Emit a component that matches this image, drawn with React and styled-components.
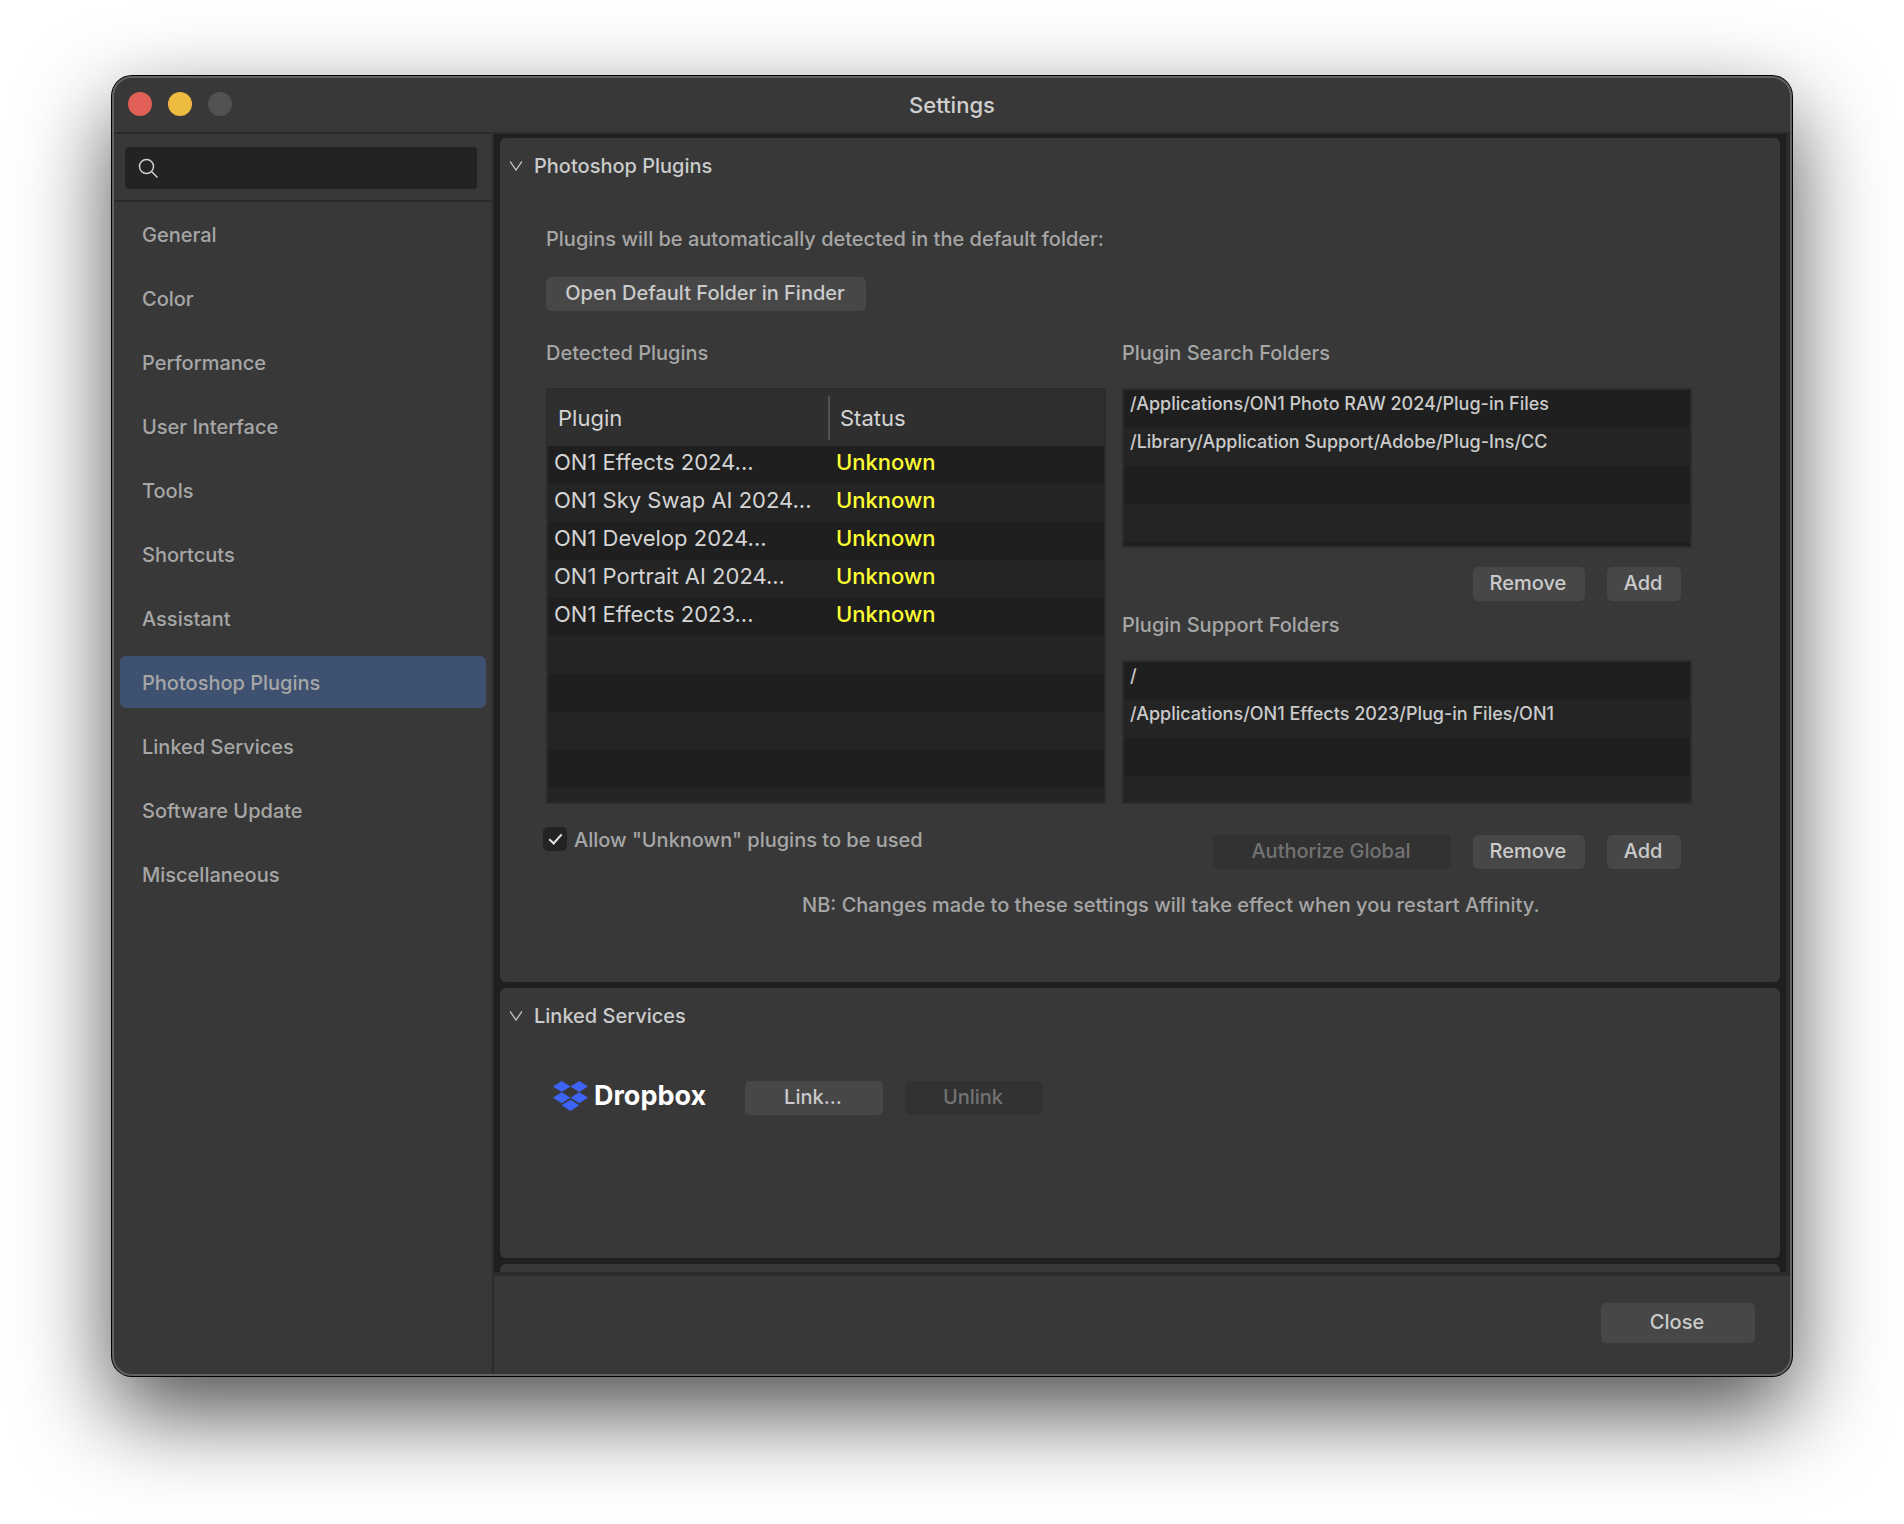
import React, { useState } from "react";
import styled, { createGlobalStyle } from "styled-components";

const GlobalStyle = createGlobalStyle`
  *, *::before, *::after { box-sizing: border-box; }
  body {
    margin: 0;
    background: #ffffff;
    font-family: Inter, "Liberation Sans", sans-serif;
    font-size: 20px;
    font-weight: 500;
    line-height: 24px;
    color: #a6a6a6;
  }
  button, input { font: inherit; }
`;

const Desktop = styled.div`
  display: flex;
  height: 100vh;
  padding: 76px 112px 148px;
  overflow: hidden;
`;

const Window = styled.div`
  flex: 1;
  display: flex;
  flex-direction: column;
  min-width: 0;
  overflow: hidden;
  border: 2px solid #626262;
  border-radius: 20px;
  background: #383838;
  box-shadow: 0 0 0 1px #000000, 0 36px 90px rgba(0, 0, 0, 0.7);
`;

const TitleBar = styled.header`
  display: grid;
  grid-template-columns: 1fr auto 1fr;
  align-items: center;
  height: 56px;
  padding: 0 14px;
  border-bottom: 2px solid #2b2b2b;
`;

const Title = styled.h1`
  margin: 0;
  font-size: 22px;
  font-weight: 500;
  color: #cfcfcf;
`;

const TrafficLights = styled.div`
  display: flex;
  gap: 16px;
  padding-bottom: 2px;
`;

const Light = styled.button`
  width: 24px;
  height: 24px;
  padding: 0;
  border: 0;
  border-radius: 50%;
  background: ${(p) => p.$color};
`;

const Body = styled.div`
  flex: 1;
  display: flex;
  min-height: 0;
`;

const Sidebar = styled.aside`
  flex: none;
  width: 380px;
  border-right: 2px solid #2b2b2b;
`;

const SearchBar = styled.div`
  padding: 13px 15px 11px 11px;
  border-bottom: 2px solid #2b2b2b;
`;

const SearchField = styled.label`
  display: flex;
  align-items: center;
  gap: 8px;
  height: 42px;
  padding: 0 13px;
  border-radius: 4px;
  background: #232323;
`;

const SearchInput = styled.input`
  flex: 1;
  min-width: 0;
  padding: 0;
  border: 0;
  outline: 0;
  background: transparent;
  color: #cfcfcf;
`;

const Nav = styled.nav`
  display: flex;
  flex-direction: column;
  gap: 12px;
  padding: 6px;
`;

const NavLink = styled.a`
  padding: 15px 22px 13px;
  border-radius: 6px;
  background: ${(p) => (p.$active ? "#3f5170" : "transparent")};
  color: #a6a6a6;
  text-decoration: none;
`;

const Main = styled.main`
  flex: 1;
  display: flex;
  flex-direction: column;
  min-width: 0;
`;

const Scroller = styled.div`
  flex: 1;
  display: flex;
  flex-direction: column;
  gap: 6px;
  min-height: 0;
  overflow: hidden;
  padding: 4px 6px 0;
  border-right: 4px solid #2b2b2b;
  background: #1f1f1f;
`;

const Panel = styled.section`
  flex: none;
  border-radius: 6px;
  background: #383838;
  padding-bottom: ${(p) => p.$bottom}px;
`;

const PanelTitle = styled.h2`
  margin: 0;
  font-size: 20px;
  font-weight: 500;
`;

const PanelToggle = styled.button`
  display: flex;
  align-items: center;
  gap: 12px;
  height: 56px;
  padding: 0 10px;
  border: 0;
  background: transparent;
  color: #cbcbcb;
`;

const PanelContent = styled.div`
  padding: ${(p) => p.$top}px 88px 0 46px;
`;

const Text = styled.p`
  margin: 0;
`;

const Button = styled.button`
  min-width: ${(p) => p.$width}px;
  height: ${(p) => (p.$large ? 40 : 34)}px;
  padding: 0 12px 2px 10px;
  border: 0;
  border-radius: 5px;
  background: #474747;
  color: #cbcbcb;

  &:disabled {
    background: #323232;
    color: #727272;
  }
`;

const OpenRow = styled.div`
  margin: 26px 0 30px;
`;

const Columns = styled.div`
  display: grid;
  grid-template-columns: minmax(0, 56fr) minmax(0, 57fr);
  gap: 16px;
`;

const GroupLabel = styled.h3`
  margin: 0 0 23px;
  font-size: 20px;
  font-weight: 500;
`;

const ListBox = styled.div`
  height: ${(p) => p.$height}px;
  overflow: hidden;
  border: 2px solid #2c2c2c;
  background: linear-gradient(#1f1f1f 38px, #242424 38px) 0
    ${(p) => p.$offset || 0}px / 100% 76px;
`;

const PluginTable = styled.table`
  width: 100%;
  table-layout: fixed;
  border-collapse: collapse;
  font-size: 22px;
  font-weight: 400;
  line-height: 32px;
  text-align: left;
  color: #d4d4d4;
`;

const HeadCell = styled.th`
  height: 56px;
  width: ${(p) => p.$width};
  padding: 0 10px;
  background: ${(p) =>
    p.$divided
      ? "linear-gradient(#525252, #525252) right 0 top 6px / 2px 44px no-repeat #2f2f2f"
      : "#2f2f2f"};
  font-weight: 400;
`;

const Cell = styled.td`
  height: 38px;
  padding: 0 6px;
  vertical-align: top;
  white-space: nowrap;
  color: ${(p) => (p.$warn ? "#ffff33" : "inherit")};
  font-weight: ${(p) => (p.$warn ? 500 : 400)};
`;

const FolderList = styled.ul`
  margin: 0;
  padding: 0;
  list-style: none;
  font-size: 18px;
  line-height: 28px;
  color: #cbcbcb;
`;

const Folder = styled.li`
  height: 38px;
  padding: 0 6px;
  white-space: nowrap;
`;

const Actions = styled.div`
  display: flex;
  justify-content: flex-end;
  gap: 22px;
  padding: ${(p) => p.$top}px 11px ${(p) => p.$bottom || 0}px 0;
`;

const CheckRow = styled.label`
  display: flex;
  align-items: flex-end;
  gap: 7px;
  margin: 23px 0 0 -3px;
  line-height: 22px;
`;

const CheckBox = styled.input`
  appearance: none;
  display: grid;
  place-items: center;
  width: 24px;
  height: 24px;
  margin: 0;
  border-radius: 5px;
  background: #232323;

  &:checked::after {
    content: "";
    width: 7px;
    height: 13px;
    margin-bottom: 4px;
    border: solid #e6e6e6;
    border-width: 0 2px 2px 0;
    transform: rotate(42deg);
  }
`;

const Note = styled.p`
  margin: 24px 0 0;
  padding-left: 256px;
`;

const ServiceRow = styled.div`
  display: flex;
  align-items: flex-start;
  gap: 22px;
  padding-left: 7px;
`;

const Brand = styled.div`
  display: flex;
  align-items: center;
  gap: 6px;
  width: 170px;
  color: #ffffff;
  font-size: 27px;
  font-weight: 700;
`;

const Footer = styled.footer`
  display: flex;
  justify-content: flex-end;
  align-items: flex-start;
  height: 102px;
  padding: 27px 35px 0;
  border-top: 4px solid #2b2b2b;
`;

const SearchIcon = () => (
  <svg width="20" height="20" viewBox="0 0 20 20" fill="none" stroke="#d0d0d0" strokeWidth="1.5" aria-hidden="true">
    <circle cx="8.5" cy="8.5" r="7" />
    <path d="M13.5 13.5L19.5 19.5" />
  </svg>
);

const Chevron = () => (
  <svg width="12" height="10" viewBox="0 0 12 10" fill="none" stroke="#c4c4c4" strokeWidth="1.3" aria-hidden="true">
    <path d="M0 0.3L6 9L12 0.3" />
  </svg>
);

const DropboxMark = () => (
  <svg width="35" height="30" viewBox="0 0 35 30" fill="#3d64f6" aria-hidden="true">
    <path d="M8.7 0L17.5 5.5L8.7 11L0 5.5Z" />
    <path d="M26.3 0L35 5.5L26.3 11L17.5 5.5Z" />
    <path d="M8.7 11.2L17.5 16.7L8.7 22.2L0 16.7Z" />
    <path d="M26.3 11.2L35 16.7L26.3 22.2L17.5 16.7Z" />
    <path d="M17.5 18.8L26.3 24.3L17.5 29.9L8.7 24.3Z" />
  </svg>
);

const sections = [
  "General",
  "Color",
  "Performance",
  "User Interface",
  "Tools",
  "Shortcuts",
  "Assistant",
  "Photoshop Plugins",
  "Linked Services",
  "Software Update",
  "Miscellaneous",
];

const plugins = [
  "ON1 Effects 2024...",
  "ON1 Sky Swap AI 2024...",
  "ON1 Develop 2024...",
  "ON1 Portrait AI 2024...",
  "ON1 Effects 2023...",
];

const searchFolders = [
  "/Applications/ON1 Photo RAW 2024/Plug-in Files",
  "/Library/Application Support/Adobe/Plug-Ins/CC",
];

const supportFolders = ["/", "/Applications/ON1 Effects 2023/Plug-in Files/ON1"];

function FolderBox({ height, folders }) {
  return (
    <ListBox $height={height}>
      <FolderList>
        {folders.map((f) => (
          <Folder key={f}>{f}</Folder>
        ))}
      </FolderList>
    </ListBox>
  );
}

function Section({ title, top, bottom, children }) {
  return (
    <Panel $bottom={bottom}>
      <PanelTitle>
        <PanelToggle type="button" aria-expanded="true">
          <Chevron />
          {title}
        </PanelToggle>
      </PanelTitle>
      <PanelContent $top={top}>{children}</PanelContent>
    </Panel>
  );
}

export default function App() {
  const [active, setActive] = useState("Photoshop Plugins");
  const [allow, setAllow] = useState(true);

  return (
    <>
      <GlobalStyle />
      <Desktop>
        <Window>
          <TitleBar>
            <TrafficLights>
              <Light type="button" $color="#e05f57" aria-label="Close window" />
              <Light type="button" $color="#edbb40" aria-label="Minimize" />
              <Light type="button" $color="#525252" aria-label="Zoom" disabled />
            </TrafficLights>
            <Title>Settings</Title>
          </TitleBar>
          <Body>
            <Sidebar>
              <SearchBar>
                <SearchField>
                  <SearchIcon />
                  <SearchInput type="text" aria-label="Search" />
                </SearchField>
              </SearchBar>
              <Nav>
                {sections.map((s) => (
                  <NavLink key={s} href="#" $active={s === active} onClick={() => setActive(s)}>
                    {s}
                  </NavLink>
                ))}
              </Nav>
            </Sidebar>
            <Main>
              <Scroller>
                <Section title="Photoshop Plugins" top={33} bottom={65}>
                  <Text>Plugins will be automatically detected in the default folder:</Text>
                  <OpenRow>
                    <Button type="button" $width={320}>Open Default Folder in Finder</Button>
                  </OpenRow>
                  <Columns>
                    <div>
                      <GroupLabel>Detected Plugins</GroupLabel>
                      <ListBox $height={416} $offset={56}>
                        <PluginTable>
                          <thead>
                            <tr>
                              <HeadCell $width="282px" $divided>Plugin</HeadCell>
                              <HeadCell>Status</HeadCell>
                            </tr>
                          </thead>
                          <tbody>
                            {plugins.map((p) => (
                              <tr key={p}>
                                <Cell>{p}</Cell>
                                <Cell $warn>Unknown</Cell>
                              </tr>
                            ))}
                          </tbody>
                        </PluginTable>
                      </ListBox>
                      <CheckRow>
                        <CheckBox type="checkbox" checked={allow} onChange={() => setAllow(!allow)} />
                        Allow "Unknown" plugins to be used
                      </CheckRow>
                    </div>
                    <div>
                      <GroupLabel>Plugin Search Folders</GroupLabel>
                      <FolderBox height={160} folders={searchFolders} />
                      <Actions $top={19} $bottom={12}>
                        <Button type="button" $width={112}>Remove</Button>
                        <Button type="button" $width={74}>Add</Button>
                      </Actions>
                      <GroupLabel>Plugin Support Folders</GroupLabel>
                      <FolderBox height={144} folders={supportFolders} />
                      <Actions $top={31}>
                        <Button type="button" $width={238} disabled>Authorize Global</Button>
                        <Button type="button" $width={112}>Remove</Button>
                        <Button type="button" $width={74}>Add</Button>
                      </Actions>
                    </div>
                  </Columns>
                  <Note>NB: Changes made to these settings will take effect when you restart Affinity.</Note>
                </Section>
                <Section title="Linked Services" top={37} bottom={143}>
                  <ServiceRow>
                    <Brand>
                      <DropboxMark />
                      Dropbox
                    </Brand>
                    <Button type="button" $width={138}>Link...</Button>
                    <Button type="button" $width={138} disabled>Unlink</Button>
                  </ServiceRow>
                </Section>
                <Panel $bottom={56} />
              </Scroller>
              <Footer>
                <Button type="button" $width={154} $large>Close</Button>
              </Footer>
            </Main>
          </Body>
        </Window>
      </Desktop>
    </>
  );
}
